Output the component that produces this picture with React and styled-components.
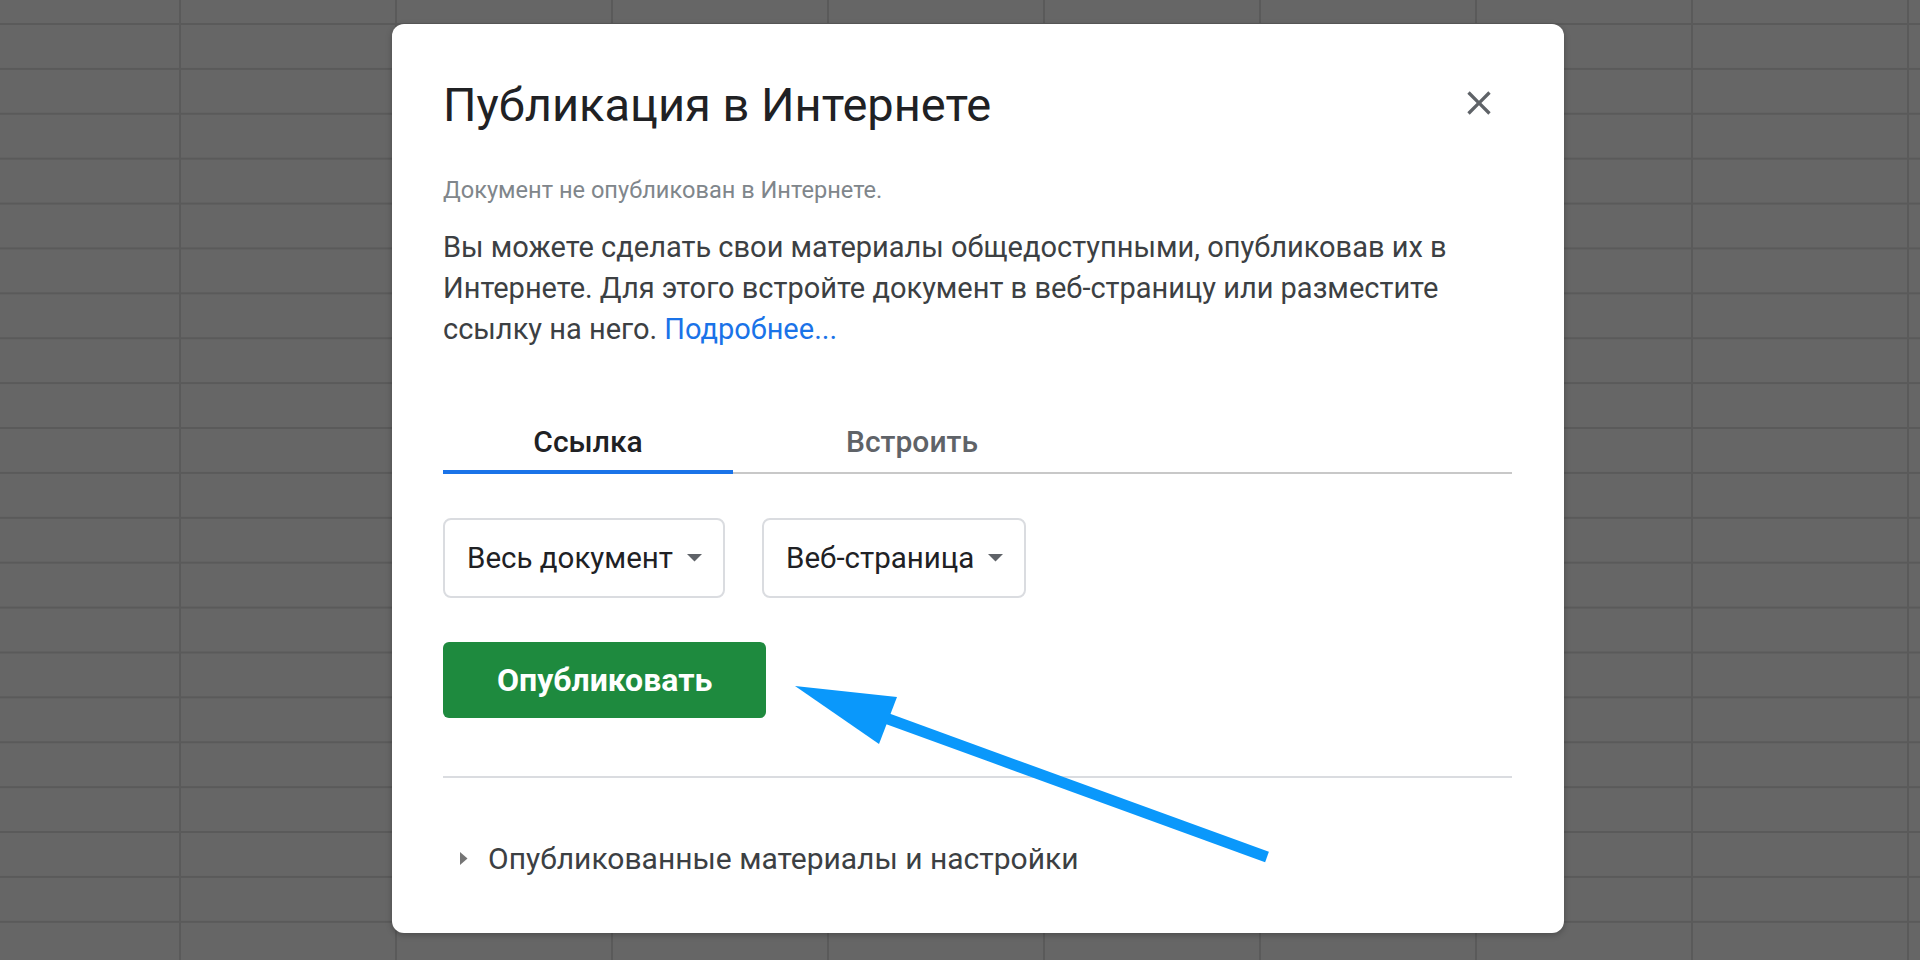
import styled, { createGlobalStyle } from 'styled-components';

const GlobalStyle = createGlobalStyle`
  html, body {
    margin: 0;
    padding: 0;
  }
  body {
    width: 1920px;
    height: 960px;
    overflow: hidden;
    font-family: Roboto, 'Noto Sans', sans-serif;
    background-color: #666666;
    background-image:
      linear-gradient(to right, #5a5a5a 2px, transparent 2px),
      linear-gradient(to bottom, #5a5a5a 2px, transparent 2px);
    background-size: 216px 44.9px;
    background-position: 179px 23px;
  }
`;

function CloseIcon() {
  return (
    <svg width="40" height="40" viewBox="0 0 24 24">
      <path
        fill="#5f6368"
        d="M19 6.41L17.59 5 12 10.59 6.41 5 5 6.41 10.59 12 5 17.59 6.41 19 12 13.41 17.59 19 19 17.59 13.41 12z"
      />
    </svg>
  );
}

function Caret() {
  return (
    <svg width="15" height="8" viewBox="0 0 15 8">
      <polygon points="0,0 15,0 7.5,7.5" fill="#5f6368" />
    </svg>
  );
}

function Expander() {
  return (
    <svg width="8" height="13" viewBox="0 0 8 13">
      <polygon points="0,0 7.5,6.5 0,13" fill="#757575" />
    </svg>
  );
}

function PointerArrow() {
  return (
    <ArrowLayer width="1920" height="960" viewBox="0 0 1920 960">
      <line x1="1267" y1="857" x2="880" y2="716" stroke="#0a98fb" strokeWidth="11" />
      <polygon points="795,686 897,697 879,744" fill="#0a98fb" />
    </ArrowLayer>
  );
}

function Select({ label }) {
  return (
    <SelectBox>
      <span>{label}</span>
      <Caret />
    </SelectBox>
  );
}

function App() {
  return (
    <Page>
      <GlobalStyle />
      <Dialog>
        <Header>
          <Title>Публикация в Интернете</Title>
          <CloseButton>
            <CloseIcon />
          </CloseButton>
        </Header>
        <Status>Документ не опубликован в Интернете.</Status>
        <Description>
          Вы можете сделать свои материалы общедоступными, опубликовав их в Интернете. Для этого
          встройте документ в веб-страницу или разместите ссылку на него.{' '}
          <Link>Подробнее...</Link>
        </Description>
        <TabList>
          <Tab $active>Ссылка</Tab>
          <Tab>Встроить</Tab>
        </TabList>
        <Selects>
          <Select label="Весь документ" />
          <Select label="Веб-страница" />
        </Selects>
        <PublishButton>Опубликовать</PublishButton>
        <Divider />
        <Settings>
          <Expander />
          <span>Опубликованные материалы и настройки</span>
        </Settings>
      </Dialog>
      <PointerArrow />
    </Page>
  );
}

const Page = styled.div`
  position: relative;
  width: 1920px;
  height: 960px;
  box-sizing: border-box;
  padding: 24px 0 0 392px;
`;
const Dialog = styled.div`
  width: 1172px;
  box-sizing: border-box;
  padding: 49px 52px 55px 51px;
  background: #fff;
  border-radius: 12px;
  box-shadow: 0 2px 6px rgba(0, 0, 0, 0.25);
  display: flex;
  flex-direction: column;
`;
const Header = styled.div`
  height: 60px;
  display: flex;
  justify-content: space-between;
  align-items: center;
`;
const Title = styled.div`
  color: #202124;
  font-size: 47px;
  font-weight: 400;
  line-height: 60px;
  padding-top: 3px;
`;
const CloseButton = styled.div`
  width: 48px;
  height: 48px;
  margin-right: 9px;
  display: flex;
  justify-content: center;
  align-items: center;
`;
const Status = styled.div`
  margin-top: 42px;
  color: #80868b;
  font-size: 23.6px;
  line-height: 30px;
`;
const Description = styled.div`
  margin-top: 22px;
  color: #3c4043;
  font-size: 29px;
  line-height: 41px;
`;
const Link = styled.span`
  color: #1a73e8;
`;
const TabList = styled.div`
  margin-top: 60px;
  display: flex;
  gap: 34px;
  box-shadow: inset 0 -2px 0 #c8c8c8;
`;
const Tab = styled.div`
  width: 290px;
  height: 64px;
  box-sizing: border-box;
  padding-top: 15px;
  text-align: center;
  font-size: 30px;
  font-weight: 500;
  line-height: 34px;
  color: ${(p) => (p.$active ? '#202124' : '#5f6368')};
  border-bottom: 4px solid ${(p) => (p.$active ? '#1a73e8' : 'transparent')};
`;
const Selects = styled.div`
  margin-top: 44px;
  display: flex;
  gap: 37px;
`;
const SelectBox = styled.div`
  height: 80px;
  box-sizing: border-box;
  padding: 0 21px 0 22px;
  display: flex;
  align-items: center;
  gap: 14px;
  border: 2px solid #dadce0;
  border-radius: 8px;
  color: #202124;
  font-size: 29.5px;
`;
const PublishButton = styled.div`
  margin-top: 44px;
  align-self: flex-start;
  height: 76px;
  box-sizing: border-box;
  padding: 0 54px;
  display: flex;
  align-items: center;
  background: #1e8a3e;
  border-radius: 6px;
  color: #fff;
  font-size: 32px;
  font-weight: 700;
`;
const Divider = styled.div`
  margin-top: 58px;
  height: 2px;
  background: #dadce0;
`;
const Settings = styled.div`
  margin-top: 60px;
  padding-left: 17px;
  height: 40px;
  display: flex;
  align-items: center;
  gap: 20px;
  color: #3c4043;
  font-size: 30px;
`;
const ArrowLayer = styled.svg`
  position: absolute;
  left: 0;
  top: 0;
  pointer-events: none;
`;

export default App;
